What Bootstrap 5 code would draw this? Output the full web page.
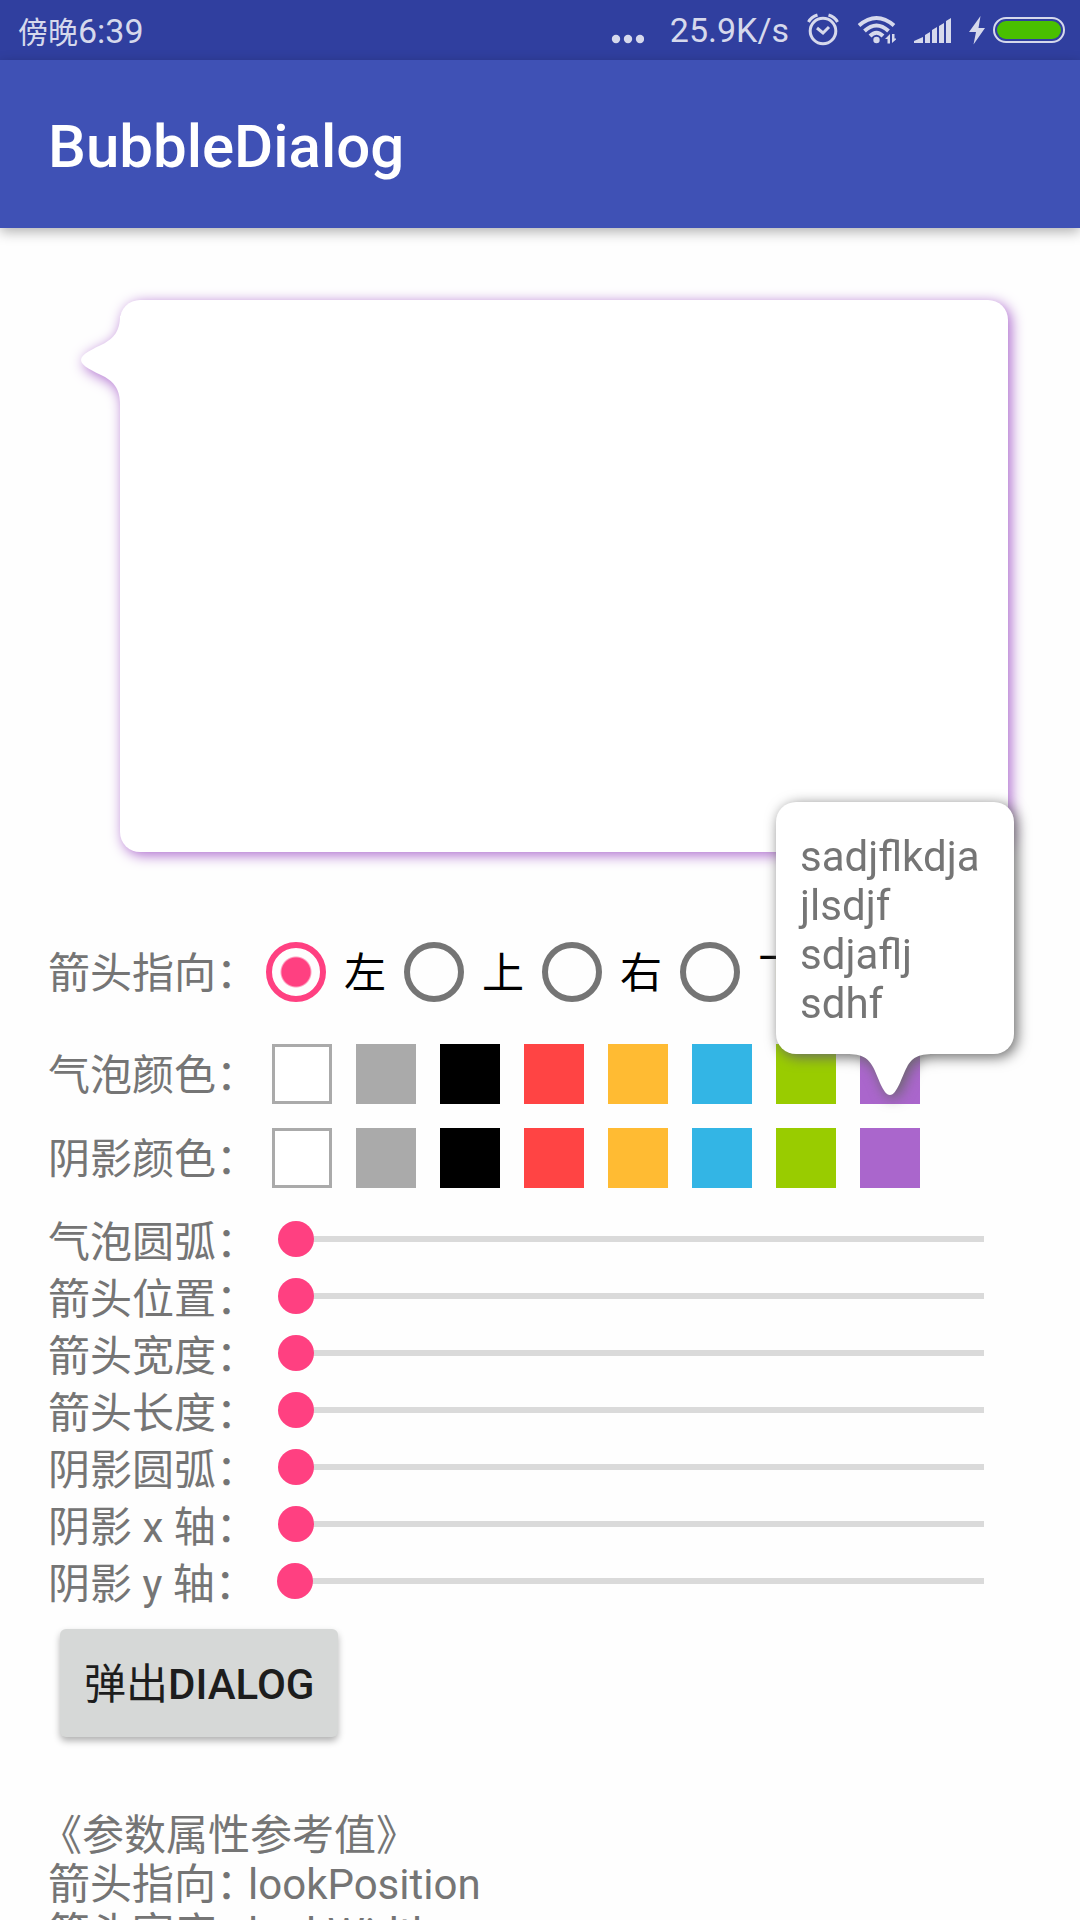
<!DOCTYPE html>
<html lang="zh-CN">
<head>
<meta charset="utf-8">
<meta name="viewport" content="width=device-width, initial-scale=1">
<title>BubbleDialog</title>
<link href="https://cdn.jsdelivr.net/npm/bootstrap@5.3.0/dist/css/bootstrap.min.css" rel="stylesheet">
<style>
  body { font-family: Roboto, "Noto Sans CJK SC", sans-serif; font-size: 42px; line-height: 49px; color: #757575; background: #fefefe; }
  .status-bar { height: 60px; padding: 0 15px 0 18px; background: #303f9f; color: #d6d9ec; font-size: 34px; line-height: 62px; }
  .status-bar .period { font-size: 30px; }
  .status-icons { gap: 18px; }
  .rate { margin-left: 8px; }
  .title-bar { height: 168px; padding: 6px 48px 0; background: #3f51b5; box-shadow: 0 4px 12px rgba(0,0,0,.3); z-index: 1; }
  .title-bar h1 { font-size: 60px; line-height: 70px; font-weight: 500; }
  .page { padding: 72px 48px 48px; overflow-y: auto; scrollbar-width: none; }
  .page::-webkit-scrollbar { display: none; }

  .bubble { margin: 0 24px 90px 72px; height: 552px; border-radius: 20px; background: #fff; filter: drop-shadow(3px 3px 7px #aa66cc); }
  .bubble-tip { left: -39px; top: 16px; }

  .colon { display: inline-block; width: 32px; }
  .bracket { margin-left: -8px; }
  .field-row { height: 60px; }
  .field-row > span, .pick label { padding-top: 3px; }
  .colors-row { margin: 42px 0 24px; }
  .shadows-row { margin-bottom: 22px; }
  .pick { width: 138px; }
  .pick .form-check-input { width: 60px; height: 60px; margin: 0 18px; border: 6px solid #757575; background: none; box-shadow: none; flex: none; }
  .pick .form-check-input:checked { border-color: #ff4081; background: radial-gradient(circle, #ff4081 14px, transparent 16px); }
  .pick label { color: #000; }

  .swatches { gap: 24px; margin-left: 24px; }
  .swatch { width: 60px; height: 60px; }
  .c-white { background: #fff; border: 3px solid #aaa !important; }
  .c-gray { background: #aaa; } .c-black { background: #000; } .c-red { background: #f44; }
  .c-amber { background: #fb3; } .c-blue { background: #33b5e5; } .c-green { background: #9c0; } .c-purple { background: #a6c; }

  .popup { left: -84px; bottom: 50px; width: 238px; padding: 30px 24px 26px; border-radius: 20px; background: #fff; filter: drop-shadow(3px 3px 7px #666); z-index: 2; text-align: left; }
  .popup-tip { left: 70px; top: 100%; margin-top: -1px; }

  .slider-row { height: 57px; }
  .slider-row label { padding-top: 8px; }
  .slider-row .form-range { flex: 1; margin: 0 30px; height: 36px; }
  .form-range::-webkit-slider-runnable-track { height: 36px; border-radius: 0; background: linear-gradient(#dadada, #dadada) center / calc(100% - 36px) 6px no-repeat; }
  .form-range::-webkit-slider-thumb { width: 36px; height: 36px; margin-top: 0; border-radius: 50%; background: #ff4081; }

  .pop-btn { margin: 20px 12px 74px; padding: 3px 24px 0; height: 108px; border: 0; border-radius: 6px; background: #d6d8d7; color: #1d1d1d; font-size: 42px; font-weight: 500; box-shadow: 0 4px 7px rgba(0,0,0,.3); }
</style>
</head>
<body class="vh-100 d-flex flex-column overflow-hidden">
  <div class="status-bar d-flex justify-content-between flex-shrink-0">
    <div><span class="period">傍晚</span>6:39</div>
    <div class="status-icons d-flex align-items-center">
      <svg width="33" height="60" fill="#d6d9ec"><circle cx="5" cy="39" r="4.2"/><circle cx="17" cy="39" r="4.2"/><circle cx="29" cy="39" r="4.2"/></svg>
      <span class="rate">25.9K/s</span>
      <svg width="32" height="60" fill="none" stroke="#d6d9ec" stroke-width="3"><circle cx="16" cy="31" r="12.8"/><path d="M10 28l6 5 6-6M1.500 22Q4 17 10.500 15M30.500 22Q28 17 21.500 15"/></svg>
      <svg width="39" height="60" fill="none" stroke="#d6d9ec" stroke-width="4"><path d="M2 25.500Q19.500 10.500 37 25.500M7.500 31Q19.500 20 31.500 31M13 36Q19.500 29.500 26 36"/><circle cx="19.500" cy="40" r="3.200" fill="#d6d9ec" stroke="none"/><path d="M28.500 39h4.500V33M33 43.500V33M36 33v10.500" stroke="#303f9f" stroke-width="5"/><path d="M28 39l5-5v9.500h-2.500V39zM35 34h2.500v4.500H40L35 43z" fill="#d6d9ec" stroke="none"/></svg>
      <svg width="37" height="60" fill="#d6d9ec"><path d="M0 43v-2l9-4v6zM11 43V35l5-3v11zM18 43V30l5-3v16zM25 43V26l5-3v20zM32 43V21l5-3v25z"/></svg>
      <div class="d-flex gap-2">
        <svg width="16" height="60" fill="#d6d9ec"><path d="M11.500 16L0 32h7L4.500 44.500 16 28H9.500z"/></svg>
        <svg width="72" height="60"><rect x="1" y="18" width="70" height="24" rx="12" fill="none" stroke="#d6d9ec" stroke-width="2"/><rect x="4" y="21" width="64" height="18" rx="9" fill="#49c000"/></svg>
      </div>
    </div>
  </div>

  <header class="title-bar d-flex align-items-center flex-shrink-0 position-relative">
    <h1 class="m-0 text-white">BubbleDialog</h1>
  </header>

  <main class="page flex-grow-1">
    <div class="bubble position-relative">
      <svg class="bubble-tip position-absolute" width="40" height="88" fill="#fff"><path d="M39 0C39 16 32 22 24 27C12 33 0 38 0 44S12 55 24 61C32 66 39 72 39 88H40V0z"/></svg>
    </div>

    <div class="field-row d-flex align-items-center" role="radiogroup" aria-labelledby="dir">
      <span id="dir">箭头指向<span class="colon">：</span></span>
      <div class="pick d-flex align-items-center flex-shrink-0"><input class="form-check-input" type="radio" name="dir" id="dl" checked><label for="dl">左</label></div>
      <div class="pick d-flex align-items-center flex-shrink-0"><input class="form-check-input" type="radio" name="dir" id="dt"><label for="dt">上</label></div>
      <div class="pick d-flex align-items-center flex-shrink-0"><input class="form-check-input" type="radio" name="dir" id="dr"><label for="dr">右</label></div>
      <div class="pick d-flex align-items-center flex-shrink-0"><input class="form-check-input" type="radio" name="dir" id="db"><label for="db">下</label></div>
    </div>

    <div class="field-row colors-row d-flex align-items-center">
      <span>气泡颜色<span class="colon">：</span></span>
      <div class="swatches d-flex">
        <button type="button" class="swatch border-0 p-0 c-white" aria-label="white"></button>
        <button type="button" class="swatch border-0 p-0 c-gray" aria-label="gray"></button>
        <button type="button" class="swatch border-0 p-0 c-black" aria-label="black"></button>
        <button type="button" class="swatch border-0 p-0 c-red" aria-label="red"></button>
        <button type="button" class="swatch border-0 p-0 c-amber" aria-label="amber"></button>
        <button type="button" class="swatch border-0 p-0 c-blue" aria-label="blue"></button>
        <button type="button" class="swatch border-0 p-0 c-green" aria-label="green"></button>
        <div class="position-relative">
          <button type="button" class="swatch border-0 p-0 d-block c-purple" aria-label="purple"></button>
          <div class="popup position-absolute" role="tooltip">sadjflkdja<br>jlsdjf<br>sdjaflj<br>sdhf
            <svg class="popup-tip position-absolute" width="88" height="42" fill="#fff"><path d="M0 0V1C17 1 22 5 27 14C32 23 37 42 44 42S56 23 61 14C66 5 71 1 88 1V0z"/></svg>
          </div>
        </div>
      </div>
    </div>

    <div class="field-row shadows-row d-flex align-items-center">
      <span>阴影颜色<span class="colon">：</span></span>
      <div class="swatches d-flex">
        <button type="button" class="swatch border-0 p-0 c-white" aria-label="white"></button>
        <button type="button" class="swatch border-0 p-0 c-gray" aria-label="gray"></button>
        <button type="button" class="swatch border-0 p-0 c-black" aria-label="black"></button>
        <button type="button" class="swatch border-0 p-0 c-red" aria-label="red"></button>
        <button type="button" class="swatch border-0 p-0 c-amber" aria-label="amber"></button>
        <button type="button" class="swatch border-0 p-0 c-blue" aria-label="blue"></button>
        <button type="button" class="swatch border-0 p-0 c-green" aria-label="green"></button>
        <button type="button" class="swatch border-0 p-0 c-purple" aria-label="purple"></button>
      </div>
    </div>

    <div class="slider-row d-flex align-items-center"><label for="s1">气泡圆弧<span class="colon">：</span></label><input type="range" class="form-range" id="s1" value="0"></div>
    <div class="slider-row d-flex align-items-center"><label for="s2">箭头位置<span class="colon">：</span></label><input type="range" class="form-range" id="s2" value="0"></div>
    <div class="slider-row d-flex align-items-center"><label for="s3">箭头宽度<span class="colon">：</span></label><input type="range" class="form-range" id="s3" value="0"></div>
    <div class="slider-row d-flex align-items-center"><label for="s4">箭头长度<span class="colon">：</span></label><input type="range" class="form-range" id="s4" value="0"></div>
    <div class="slider-row d-flex align-items-center"><label for="s5">阴影圆弧<span class="colon">：</span></label><input type="range" class="form-range" id="s5" value="0"></div>
    <div class="slider-row d-flex align-items-center"><label for="s6">阴影 x 轴<span class="colon">：</span></label><input type="range" class="form-range" id="s6" value="0"></div>
    <div class="slider-row d-flex align-items-center"><label for="s7">阴影 y 轴<span class="colon">：</span></label><input type="range" class="form-range" id="s7" value="0"></div>

    <button type="button" class="btn pop-btn d-block"><span class="fw-normal">弹出</span>DIALOG</button>

    <div><span class="bracket">《</span>参数属性参考值》</div>
    <div>箭头指向<span class="colon">：</span>lookPosition</div>
    <div>箭头宽度<span class="colon">：</span>lookWidth</div>
  </main>
<script src="https://cdn.jsdelivr.net/npm/bootstrap@5.3.0/dist/js/bootstrap.bundle.min.js"></script>
</body>
</html>
